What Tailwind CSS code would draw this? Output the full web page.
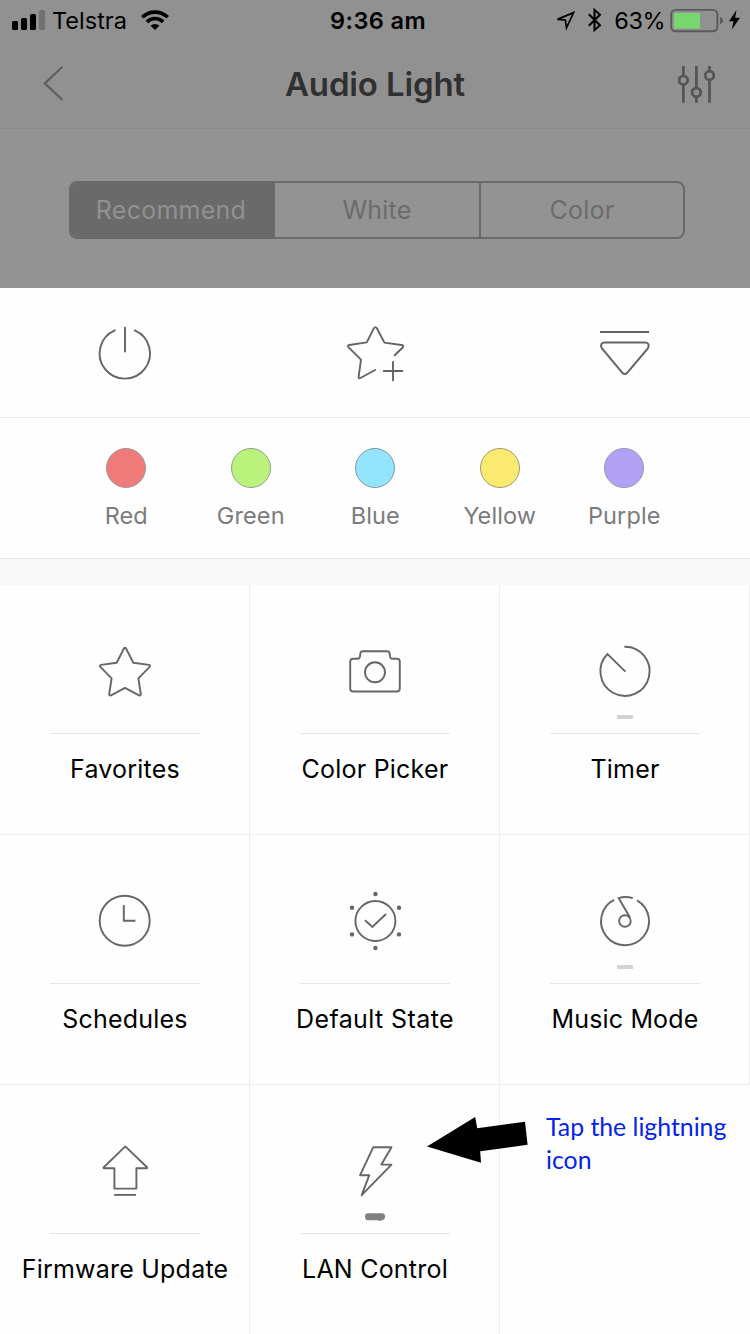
<!DOCTYPE html>
<html lang="en">
<head>
<meta charset="utf-8">
<title>Audio Light</title>
<script src="https://cdn.jsdelivr.net/npm/@tailwindcss/browser@4"></script>
</head>
<body class="w-[750px] h-[1334px] overflow-hidden bg-white font-['Inter',sans-serif]">
<main class="relative w-[750px] h-[1334px] bg-[#fefefe] overflow-hidden">

  <!-- Dimmed page behind the sheet -->
  <header class="h-[129px] flex flex-col bg-[#919191] border-b border-[#8a8a8a]">
    <div class="h-[40px] flex items-center justify-between text-black text-[23.5px] leading-[38px]">
      <div class="flex-1 flex items-center pl-3">
        <svg class="w-[33px] h-[40px]" viewBox="0 0 33 40"><rect y="21" width="6" height="9" rx="1.5"/><rect x="9" y="18" width="6" height="12" rx="1.5"/><rect x="18" y="14" width="6" height="16" rx="1.5"/><rect x="27" y="10" width="6" height="20" rx="1.5" fill="#717171"/></svg>
        <span class="ml-[7px] pt-[2px]">Telstra</span>
        <svg class="ml-[14px] w-[28px] h-[40px]" viewBox="0 0 28 40" fill="none" stroke="#000" stroke-width="3.7"><path d="M1.2 17.3A18.2 18.2 0 0 1 26.8 17.3"/><path d="M5.8 21.8A11.8 11.8 0 0 1 22.2 21.8"/><path d="M14 30L9.6 25.7A6.3 6.3 0 0 1 18.4 25.7Z" fill="#000" stroke="none"/></svg>
      </div>
      <span class="pt-[2px] pl-[7px] pr-1 font-semibold tracking-[0.4px]">9:36 am</span>
      <div class="flex-1 flex items-center justify-end pr-[9px]">
        <svg class="w-[20px] h-[40px]" viewBox="556 0 20 40" fill="none" stroke="#000" stroke-width="1.7"><path d="M558.4 19.4L574.6 12.6L567.5 27.8L566.3 20Z"/></svg>
        <svg class="ml-[13px] w-[14px] h-[40px]" viewBox="588 0 14 40" fill="none" stroke="#000" stroke-width="2"><path d="M588.8 14.2L600 25.3L594.5 30V10L600 14.7L588.8 25.8"/></svg>
        <span class="ml-[12px] pt-[2px] tracking-[-0.5px]">63%</span>
        <svg class="ml-[4px] w-[72px] h-[40px]" viewBox="669 0 72 40"><rect x="671.2" y="9.9" width="46.2" height="21.4" rx="4.5" fill="none" stroke="#5a5a5a" stroke-width="1.9"/><rect x="674" y="13" width="26" height="15.4" rx="1" fill="#76d86f"/><path d="M720 17.2Q723 18 723 20.5T720 24Z" fill="#5a5a5a"/><path d="M736.5 10L729 21.2H733.6L731.8 29.5L740 17.8H735.2Z"/></svg>
      </div>
    </div>
    <div class="h-[88px] flex items-center">
      <svg class="w-[72px] h-[88px]" viewBox="0 40 72 88" fill="none" stroke="#606060" stroke-width="2.2"><path d="M62.3 66.8L44.8 83.4L62.3 99.8"/></svg>
      <h1 class="flex-1 text-center font-semibold text-[33px] leading-[88px] tracking-[-0.15px] text-[#303030]">Audio Light</h1>
      <svg class="w-[72px] h-[88px]" viewBox="678 40 72 88" fill="none" stroke="#555" stroke-width="2.8"><path d="M683.4 66V75.8M683.4 84.4V102.7M696.4 66V88M696.4 96.8V102.7M709.5 66V71M709.5 80V102.7"/><circle cx="683.4" cy="80.2" r="4.3"/><circle cx="696.4" cy="92.4" r="4.3"/><circle cx="709.5" cy="75.5" r="4.3"/></svg>
    </div>
  </header>
  <section class="h-[159px] bg-[#939393] pt-[52px] pl-[69px]">
    <div class="w-[616px] h-[58px] flex rounded-lg border-2 border-[#6a6a6a] overflow-hidden text-[25px] leading-[54px] tracking-[0.25px] text-[#6c6c6c] text-center">
      <div class="w-[204px] pr-1 bg-[#6a6a6a] text-[#919191]">Recommend</div>
      <div class="w-[206px] border-r-2 border-[#6a6a6a]">White</div>
      <div class="flex-1">Color</div>
    </div>
  </section>

  <!-- Quick actions -->
  <section class="h-[130px] grid grid-cols-3 justify-items-center pt-[25px] border-b border-[#ececec]">
    <svg class="size-20" viewBox="0 0 80 80" fill="none" stroke="#646464" stroke-width="1.9" stroke-linecap="round"><path d="M49.8 17.3A25.2 25.2 0 1 1 29.8 17.3M40 14.6V38.6"/></svg>
    <svg class="size-20" viewBox="0 0 80 80" fill="none" stroke="#646464" stroke-width="1.9" stroke-linecap="round" stroke-linejoin="round"><path d="M59.7 42.3L67.5 34.8Q69.3 32.6 66.6 32L49.4 29.6L41.9 15.2Q40.4 13 38.9 15.2L31.8 29.4L14.4 32Q12 32.6 13.6 34.4L26 46.6L23.6 63.8Q23.6 66 25.4 65L40.2 57"/><path d="M58 49V67.4M48.8 58H67.4"/></svg>
    <svg class="size-20" viewBox="0 0 80 80" fill="none" stroke="#646464" stroke-width="2"><path d="M15 19H64"/><path d="M19.5 29.6H60.3Q65.2 30 63 35.2L42.2 59.8Q39.8 62.4 37.4 59.8L16.8 35.2Q14.4 30 19.5 29.6Z"/></svg>
  </section>

  <!-- Colour presets -->
  <section class="h-[141px] flex pl-[64px] pt-[30px] border-b border-[#e6e6e6] text-[23.5px] leading-[30px] tracking-[0.1px] text-[#7b7b7b]">
    <div class="w-[124.5px] flex flex-col items-center gap-[13px]"><i class="size-10 rounded-full border border-[#a09a98] bg-[#ee7b79]"></i><span>Red</span></div>
    <div class="w-[124.5px] flex flex-col items-center gap-[13px]"><i class="size-10 rounded-full border border-[#94a08c] bg-[#baf27c]"></i><span>Green</span></div>
    <div class="w-[124.5px] flex flex-col items-center gap-[13px]"><i class="size-10 rounded-full border border-[#7f9aa6] bg-[#93e4fe]"></i><span>Blue</span></div>
    <div class="w-[124.5px] flex flex-col items-center gap-[13px]"><i class="size-10 rounded-full border border-[#a09a72] bg-[#fbea70]"></i><span>Yellow</span></div>
    <div class="w-[124.5px] flex flex-col items-center gap-[13px]"><i class="size-10 rounded-full border border-[#9a94a8] bg-[#b1a2f8]"></i><span>Purple</span></div>
  </section>
  <div class="h-[26px] bg-[#f8f8f8]"></div>

  <!-- Feature grid -->
  <section class="grid grid-cols-3 auto-rows-[250px] text-[25px] leading-[32px] tracking-[0.22px] text-black whitespace-nowrap">
    <div class="flex flex-col items-center pl-px pt-[46px] border-r border-b border-[#eeeeee]">
      <svg class="size-20" viewBox="0 0 80 80" fill="none" stroke="#666" stroke-width="1.9" stroke-linejoin="round"><path d="M38.8 17.8Q40 15.8 41.2 17.8L48.3 31.8L64 33.9Q65.7 34.5 64.6 35.8L53.4 47.3L55.8 63Q55.8 65 54 64.3L40 56.9L26 64.3Q24.2 65 24.2 63L26.6 47.3L15.4 35.8Q14.3 34.5 16 33.9L31.7 31.8Z"/></svg>
      <i class="mt-1 h-1"></i><hr class="mt-[14px] w-[150px] border-[#e6e6e6]"><span class="mt-[19px]">Favorites</span>
    </div>
    <div class="flex flex-col items-center pl-px pt-[46px] border-r border-b border-[#eeeeee]">
      <svg class="size-20" viewBox="0 0 80 80" fill="none" stroke="#666" stroke-width="1.9"><path d="M18.2 27.7h4.3q2 0 2.4-2l.5-3.4q.4-2 2.4-2h24.4q2 0 2.4 2l.5 3.4q.4 2 2.4 2h4.3q3 0 3 3v26.8q0 3-3 3H18.2q-3 0-3-3V30.7q0-3 3-3Z"/><circle cx="40" cy="41.3" r="10"/></svg>
      <i class="mt-1 h-1"></i><hr class="mt-[14px] w-[150px] border-[#e6e6e6]"><span class="mt-[19px]">Color Picker</span>
    </div>
    <div class="flex flex-col items-center pl-px pt-[46px] border-r border-b border-[#eeeeee]">
      <svg class="size-20" viewBox="0 0 80 80" fill="none" stroke="#666" stroke-width="1.9"><path d="M39.4 15.7A24.6 24.6 0 1 1 22.5 23L40.4 40.6"/></svg>
      <i class="mt-1 h-1 w-4 bg-[#d2d2d2]"></i><hr class="mt-[14px] w-[150px] border-[#e6e6e6]"><span class="mt-[19px]">Timer</span>
    </div>
    <div class="flex flex-col items-center pl-px pt-[46px] border-r border-b border-[#eeeeee]">
      <svg class="size-20" viewBox="0 0 80 80" fill="none" stroke="#666" stroke-width="1.9"><circle cx="39.7" cy="39.7" r="25"/><path d="M38.8 24V39.7H50.4"/></svg>
      <i class="mt-1 h-1"></i><hr class="mt-[14px] w-[150px] border-[#e6e6e6]"><span class="mt-[19px]">Schedules</span>
    </div>
    <div class="flex flex-col items-center pl-px pt-[46px] border-r border-b border-[#eeeeee]">
      <svg class="size-20" viewBox="0 0 80 80" fill="none" stroke="#666" stroke-width="1.9"><circle cx="40.4" cy="40" r="20"/><path d="M30 39.2L37.4 46L51 33"/><g fill="#666" stroke="none"><circle cx="40.4" cy="13" r="2.2"/><circle cx="40.4" cy="67" r="2.2"/><circle cx="17" cy="26.7" r="2.2"/><circle cx="64" cy="26.7" r="2.2"/><circle cx="17" cy="53.4" r="2.2"/><circle cx="64" cy="53.4" r="2.2"/></g></svg>
      <i class="mt-1 h-1"></i><hr class="mt-[14px] w-[150px] border-[#e6e6e6]"><span class="mt-[19px] tracking-[0.4px]">Default State</span>
    </div>
    <div class="flex flex-col items-center pl-px pt-[46px] border-r border-b border-[#eeeeee]">
      <svg class="size-20" viewBox="0 0 80 80" fill="none" stroke="#666" stroke-width="1.9"><path d="M52 19.4A24 24 0 1 1 29 18.9"/><path d="M47.8 17.1Q40 15 33.6 17.1L45 36.5"/><circle cx="39.9" cy="40" r="5.8"/></svg>
      <i class="mt-1 h-1 w-4 bg-[#d2d4d6]"></i><hr class="mt-[14px] w-[150px] border-[#e6e6e6]"><span class="mt-[19px] tracking-[0.15px]">Music Mode</span>
    </div>
    <div class="flex flex-col items-center pl-px pt-[46px] border-r border-[#eeeeee]">
      <svg class="size-20" viewBox="0 0 80 80" fill="none" stroke="#666" stroke-width="1.9" stroke-linejoin="round"><path d="M39 16.6Q40.3 15 41.6 16.6L62 36.2Q62.6 37.2 61.4 37.2H51.4V57.6H29.4V37.2H19.2Q18 37.2 18.8 36.2Z"/><path d="M29.2 63.9H51"/></svg>
      <i class="mt-1 h-1"></i><hr class="mt-[14px] w-[150px] border-[#e6e6e6]"><span class="mt-[19px]">Firmware Update</span>
    </div>
    <div class="flex flex-col items-center pl-px pt-[46px] border-r border-[#eeeeee]">
      <svg class="size-20" viewBox="0 0 80 80" fill="none" stroke="#666" stroke-width="1.9" stroke-linejoin="round"><path d="M38.3 16.2H56.5L46.4 33.6H56.5L26.7 64.2L34.3 44.2H25.1Z"/></svg>
      <svg class="mt-[2px] w-5 h-2" viewBox="0 0 20 8"><path d="M3 .3H17Q20 .3 20 3.5Q20 6.8 17.3 7L15 8L12.5 7.2H3Q0 7 0 3.7Q0 .3 3 .3Z" fill="#808080"/></svg>
      <hr class="mt-[12px] w-[150px] border-[#e6e6e6]"><span class="mt-[19px]">LAN Control</span>
    </div>
  </section>

  <!-- Annotation laid over the grid -->
  <svg class="absolute left-[420px] top-[1110px] w-[115px] h-[60px]" viewBox="420 1110 115 60"><path d="M427 1146.5L475.2 1117L477.2 1128.3L525 1121.8L527.6 1144.7L480.2 1151.3L481 1162.8Z"/></svg>
  <p class="absolute left-[546px] top-[1110px] w-[200px] font-['Lato',sans-serif] text-[24.8px] leading-[33px] text-[#0423ea]">Tap the lightning<br>icon</p>
</main>
</body>
</html>
